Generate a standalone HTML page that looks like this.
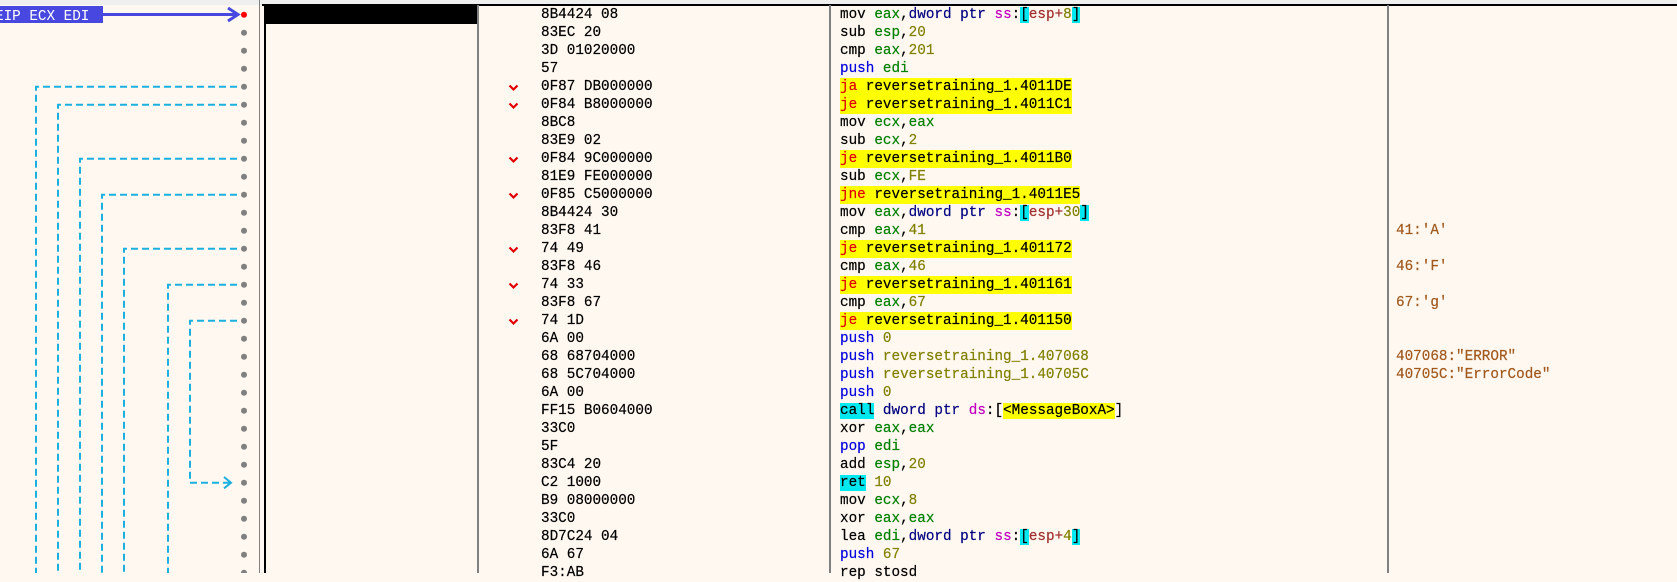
<!DOCTYPE html>
<html><head><meta charset="utf-8"><style>
*{margin:0;padding:0}
body{width:1677px;height:573px;overflow:hidden;background:#fff8f0;position:relative;font-family:"Liberation Mono",monospace;font-size:14.3px}
.top{position:absolute;left:0;top:0;width:1677px;height:5px;background:#efefef}
.hl{position:absolute;left:262px;top:4px;width:1415px;height:2px;background:#000}
.v{position:absolute;top:5px;bottom:0;width:2px;background:#808080}
.r{position:absolute;left:0;height:18px;line-height:18px;white-space:pre;-webkit-text-stroke:0.2px currentColor}
.b{position:absolute;left:541px}
.d{position:absolute;left:840px}
.c{position:absolute;left:1396px;color:#a0581c}
.a{position:absolute;left:508px;top:6px;width:11px;height:8px}
.m{color:#000}.g{color:#008000}.n{color:#808000}.s{color:#c000c0}.p{color:#000080}.bl{color:#0000e0}.rd{color:#a03030}
.cy{background:#00e8f0}.y{background:#ffff00}.jr{color:#e00000}
</style></head><body>
<div class="top"></div>
<div class="hl"></div>
<div class="v" style="left:259px;width:1px;top:0"></div>
<div class="v" style="left:264px;width:2px;background:#000"></div>
<div style="position:absolute;left:266px;top:6px;width:212px;height:18px;background:#000"></div>
<div class="v" style="left:477px"></div>
<div class="v" style="left:829px"></div>
<div class="v" style="left:1387px"></div>
<svg style="position:absolute;left:0;top:0" width="262" height="573">
<rect x="0" y="6" width="103" height="17" fill="#4848e0"/>
<text x="-5" y="20" font-family="Liberation Mono, monospace" font-size="14.3" fill="#fff">EIP ECX EDI</text>
<line x1="103" y1="14.5" x2="238" y2="14.5" stroke="#4848e0" stroke-width="3"/>
<polyline points="228,8 238,14.5 228,21" fill="none" stroke="#4848e0" stroke-width="3"/>
<g fill="none" stroke="#1ab0e0" stroke-width="2" stroke-dasharray="7,4">
<path d="M237 86.7H36V573"/>
<path d="M237 104.7H58V573"/>
<path d="M237 158.7H80V573"/>
<path d="M237 194.7H102V573"/>
<path d="M237 248.7H124V573"/>
<path d="M237 284.7H168V573"/>
<path d="M237 320.7H190V482.7H230"/>
</g>
<polyline points="224,477 231,482.7 224,488.4" fill="none" stroke="#1ab0e0" stroke-width="2"/>
<circle cx="244" cy="14.7" r="3" fill="#ff0000"/>
<g fill="#808080">
<circle cx="244" cy="32.7" r="3"/><circle cx="244" cy="50.7" r="3"/><circle cx="244" cy="68.7" r="3"/><circle cx="244" cy="86.7" r="3"/><circle cx="244" cy="104.7" r="3"/><circle cx="244" cy="122.7" r="3"/><circle cx="244" cy="140.7" r="3"/><circle cx="244" cy="158.7" r="3"/><circle cx="244" cy="176.7" r="3"/><circle cx="244" cy="194.7" r="3"/><circle cx="244" cy="212.7" r="3"/><circle cx="244" cy="230.7" r="3"/><circle cx="244" cy="248.7" r="3"/><circle cx="244" cy="266.7" r="3"/><circle cx="244" cy="284.7" r="3"/><circle cx="244" cy="302.7" r="3"/><circle cx="244" cy="320.7" r="3"/><circle cx="244" cy="338.7" r="3"/><circle cx="244" cy="356.7" r="3"/><circle cx="244" cy="374.7" r="3"/><circle cx="244" cy="392.7" r="3"/><circle cx="244" cy="410.7" r="3"/><circle cx="244" cy="428.7" r="3"/><circle cx="244" cy="446.7" r="3"/><circle cx="244" cy="464.7" r="3"/><circle cx="244" cy="482.7" r="3"/><circle cx="244" cy="500.7" r="3"/><circle cx="244" cy="518.7" r="3"/><circle cx="244" cy="536.7" r="3"/><circle cx="244" cy="554.7" r="3"/><circle cx="244" cy="572.7" r="3"/>
</g>
</svg>

<div class="r" style="top:6px"><span class="b">8B4424 08</span><span class="d">mov <span class="g">eax</span>,<span class="p">dword ptr</span> <span class="s">ss</span>:<span class="cy">[</span><span class="rd">esp+</span><span class="n">8</span><span class="cy">]</span></span></div>
<div class="r" style="top:24px"><span class="b">83EC 20</span><span class="d">sub <span class="g">esp</span>,<span class="n">20</span></span></div>
<div class="r" style="top:42px"><span class="b">3D 01020000</span><span class="d">cmp <span class="g">eax</span>,<span class="n">201</span></span></div>
<div class="r" style="top:60px"><span class="b">57</span><span class="d"><span class="bl">push</span> <span class="g">edi</span></span></div>
<div class="r" style="top:78px"><svg class="a" viewBox="0 0 11 8"><polyline points="1.5,1.5 5.5,5.5 9.5,1.5" fill="none" stroke="#e00000" stroke-width="2.2"/></svg><span class="b">0F87 DB000000</span><span class="d y"><span class="jr">ja</span> reversetraining_1.4011DE</span></div>
<div class="r" style="top:96px"><svg class="a" viewBox="0 0 11 8"><polyline points="1.5,1.5 5.5,5.5 9.5,1.5" fill="none" stroke="#e00000" stroke-width="2.2"/></svg><span class="b">0F84 B8000000</span><span class="d y"><span class="jr">je</span> reversetraining_1.4011C1</span></div>
<div class="r" style="top:114px"><span class="b">8BC8</span><span class="d">mov <span class="g">ecx</span>,<span class="g">eax</span></span></div>
<div class="r" style="top:132px"><span class="b">83E9 02</span><span class="d">sub <span class="g">ecx</span>,<span class="n">2</span></span></div>
<div class="r" style="top:150px"><svg class="a" viewBox="0 0 11 8"><polyline points="1.5,1.5 5.5,5.5 9.5,1.5" fill="none" stroke="#e00000" stroke-width="2.2"/></svg><span class="b">0F84 9C000000</span><span class="d y"><span class="jr">je</span> reversetraining_1.4011B0</span></div>
<div class="r" style="top:168px"><span class="b">81E9 FE000000</span><span class="d">sub <span class="g">ecx</span>,<span class="n">FE</span></span></div>
<div class="r" style="top:186px"><svg class="a" viewBox="0 0 11 8"><polyline points="1.5,1.5 5.5,5.5 9.5,1.5" fill="none" stroke="#e00000" stroke-width="2.2"/></svg><span class="b">0F85 C5000000</span><span class="d y"><span class="jr">jne</span> reversetraining_1.4011E5</span></div>
<div class="r" style="top:204px"><span class="b">8B4424 30</span><span class="d">mov <span class="g">eax</span>,<span class="p">dword ptr</span> <span class="s">ss</span>:<span class="cy">[</span><span class="rd">esp+</span><span class="n">30</span><span class="cy">]</span></span></div>
<div class="r" style="top:222px"><span class="b">83F8 41</span><span class="d">cmp <span class="g">eax</span>,<span class="n">41</span></span><span class="c">41:'A'</span></div>
<div class="r" style="top:240px"><svg class="a" viewBox="0 0 11 8"><polyline points="1.5,1.5 5.5,5.5 9.5,1.5" fill="none" stroke="#e00000" stroke-width="2.2"/></svg><span class="b">74 49</span><span class="d y"><span class="jr">je</span> reversetraining_1.401172</span></div>
<div class="r" style="top:258px"><span class="b">83F8 46</span><span class="d">cmp <span class="g">eax</span>,<span class="n">46</span></span><span class="c">46:'F'</span></div>
<div class="r" style="top:276px"><svg class="a" viewBox="0 0 11 8"><polyline points="1.5,1.5 5.5,5.5 9.5,1.5" fill="none" stroke="#e00000" stroke-width="2.2"/></svg><span class="b">74 33</span><span class="d y"><span class="jr">je</span> reversetraining_1.401161</span></div>
<div class="r" style="top:294px"><span class="b">83F8 67</span><span class="d">cmp <span class="g">eax</span>,<span class="n">67</span></span><span class="c">67:'g'</span></div>
<div class="r" style="top:312px"><svg class="a" viewBox="0 0 11 8"><polyline points="1.5,1.5 5.5,5.5 9.5,1.5" fill="none" stroke="#e00000" stroke-width="2.2"/></svg><span class="b">74 1D</span><span class="d y"><span class="jr">je</span> reversetraining_1.401150</span></div>
<div class="r" style="top:330px"><span class="b">6A 00</span><span class="d"><span class="bl">push</span> <span class="n">0</span></span></div>
<div class="r" style="top:348px"><span class="b">68 68704000</span><span class="d"><span class="bl">push</span> <span class="n">reversetraining_1.407068</span></span><span class="c">407068:"ERROR"</span></div>
<div class="r" style="top:366px"><span class="b">68 5C704000</span><span class="d"><span class="bl">push</span> <span class="n">reversetraining_1.40705C</span></span><span class="c">40705C:"ErrorCode"</span></div>
<div class="r" style="top:384px"><span class="b">6A 00</span><span class="d"><span class="bl">push</span> <span class="n">0</span></span></div>
<div class="r" style="top:402px"><span class="b">FF15 B0604000</span><span class="d"><span class="cy">call</span> <span class="p">dword ptr</span> <span class="s">ds</span>:[<span class="y">&lt;MessageBoxA&gt;</span>]</span></div>
<div class="r" style="top:420px"><span class="b">33C0</span><span class="d">xor <span class="g">eax</span>,<span class="g">eax</span></span></div>
<div class="r" style="top:438px"><span class="b">5F</span><span class="d"><span class="bl">pop</span> <span class="g">edi</span></span></div>
<div class="r" style="top:456px"><span class="b">83C4 20</span><span class="d">add <span class="g">esp</span>,<span class="n">20</span></span></div>
<div class="r" style="top:474px"><span class="b">C2 1000</span><span class="d"><span class="cy">ret</span> <span class="n">10</span></span></div>
<div class="r" style="top:492px"><span class="b">B9 08000000</span><span class="d">mov <span class="g">ecx</span>,<span class="n">8</span></span></div>
<div class="r" style="top:510px"><span class="b">33C0</span><span class="d">xor <span class="g">eax</span>,<span class="g">eax</span></span></div>
<div class="r" style="top:528px"><span class="b">8D7C24 04</span><span class="d">lea <span class="g">edi</span>,<span class="p">dword ptr</span> <span class="s">ss</span>:<span class="cy">[</span><span class="rd">esp+</span><span class="n">4</span><span class="cy">]</span></span></div>
<div class="r" style="top:546px"><span class="b">6A 67</span><span class="d"><span class="bl">push</span> <span class="n">67</span></span></div>
<div class="r" style="top:564px"><span class="b">F3:AB</span><span class="d">rep stosd</span></div>
</body></html>
